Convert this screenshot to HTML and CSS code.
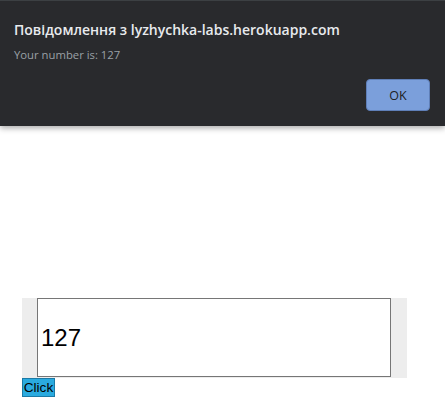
FILE: index.html
```html
<!DOCTYPE html>
<html>
<head>
<meta charset="utf-8">
<link rel="stylesheet" href="styles.css">
</head>
<body>
<div class="page">
  <div class="field">
    <input class="num" type="text" value="127">
  </div>
  <button class="click">Click</button>
</div>
<div class="dialog">
  <div class="title">Повідомлення з lyzhychka-labs.herokuapp.com</div>
  <div class="msg">Your number is: 127</div>
  <div class="actions"><button class="ok">OK</button></div>
</div>
</body>
</html>
```
FILE: styles.css
```css
html, body { margin: 0; padding: 0; background: #fff; }
body { width: 445px; height: 400px; overflow: hidden; position: relative; font-family: "Liberation Sans", Arial, sans-serif; }
.page { padding: 298px 0 0 22px; }
.field {
  width: 354px;
  background: #ededed;
  padding: 0 16px 1px 15px;
  display: flex;
}
.num {
  box-sizing: border-box;
  width: 354px;
  height: 79px;
  margin: 0;
  border: 1px solid #767676;
  padding: 0 3px;
  font-family: "Liberation Sans", Arial, sans-serif;
  font-size: 24px;
  color: #000;
  background: #fff;
  outline: none;
}
.click {
  display: block;
  box-sizing: border-box;
  margin: 0;
  width: 33px;
  height: 19px;
  padding: 0;
  border: 1px solid #1b7aa6;
  background: #2aaadf;
  color: #000;
  font-family: "Liberation Sans", Arial, sans-serif;
  font-size: 13.6px;
  line-height: 16px;
  text-align: center;
}
.dialog {
  position: absolute;
  left: 0; top: 0;
  width: 445px;
  height: 126px;
  box-sizing: border-box;
  background: #292a2d;
  border-top: 1px solid #3c4043;
  box-shadow: 0 2px 6px rgba(0,0,0,0.35);
  padding: 20px 14px 0 14px;
  font-family: "Open Sans", "Noto Sans", sans-serif;
}
.title {
  color: #e8eaed;
  font-weight: 600;
  font-size: 14px;
  line-height: 18px;
  white-space: nowrap;
}
.msg {
  color: #9aa0a6;
  font-size: 11.3px;
  line-height: 16px;
  margin-top: 8px;
}
.actions {
  display: flex;
  justify-content: flex-end;
  margin-top: 16px;
  padding-right: 1px;
}
.ok {
  width: 64px;
  height: 32px;
  border: 1px solid #5f7fb8;
  border-radius: 4px;
  background: #7b9fdb;
  color: #202124;
  font-family: "Open Sans", "Noto Sans", sans-serif;
  font-size: 12.5px;
  padding: 0;
}
```
